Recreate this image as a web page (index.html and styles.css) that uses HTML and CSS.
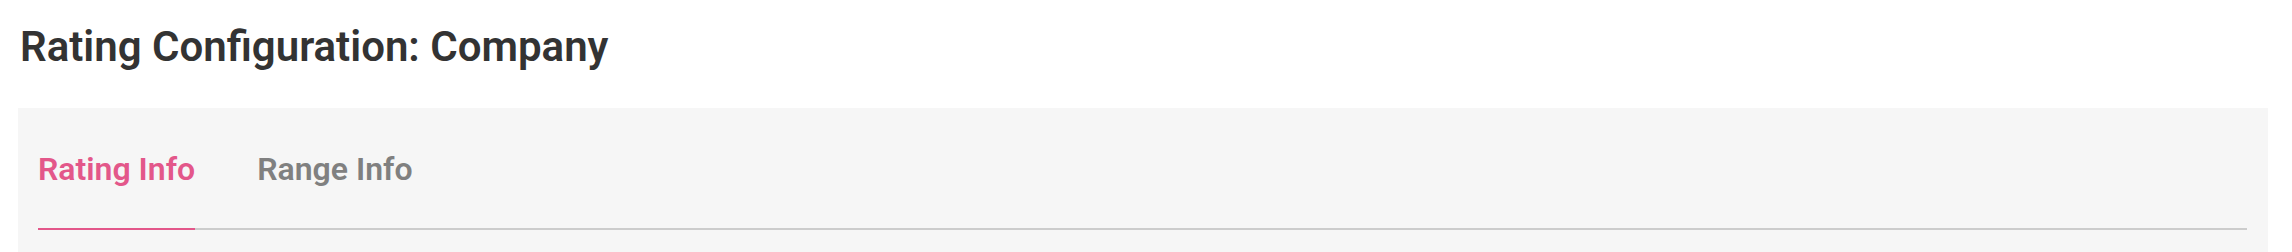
FILE: index.html
```html
<!DOCTYPE html>
<html lang="en">
<head>
<meta charset="utf-8">
<title>Rating Configuration: Company</title>
<link rel="stylesheet" href="styles.css">
</head>
<body>
<div class="page">
  <h1 class="page-title">Rating Configuration: Company</h1>
  <section class="panel">
    <nav class="tabs">
      <a class="tab tab-active" href="#">Rating Info</a>
      <a class="tab" href="#">Range Info</a>
    </nav>
  </section>
</div>
</body>
</html>
```
FILE: styles.css
```css
html, body {
  margin: 0;
  padding: 0;
  background: #ffffff;
  overflow: hidden;
}
body {
  font-family: Roboto, "Liberation Sans", sans-serif;
}
.page {
  padding: 22px 24px 0 18px;
}
.page-title {
  margin: 0 0 36px 2px;
  font-size: 42px;
  line-height: 50px;
  font-weight: 600;
  color: #333333;
}
.panel {
  background: #f6f6f6;
  padding: 41px 21px 0 20px;
  height: 144px;
  box-sizing: border-box;
}
.tabs {
  display: flex;
  gap: 62px;
  border-bottom: 2px solid #cccccc;
}
.tab {
  display: block;
  font-size: 32px;
  line-height: 40px;
  font-weight: 600;
  color: #808080;
  text-decoration: none;
  padding-bottom: 39px;
  margin-bottom: -2px;
  border-bottom: 2px solid transparent;
}
.tab-active {
  color: #e3578a;
  border-bottom-color: #e3578a;
}
```
